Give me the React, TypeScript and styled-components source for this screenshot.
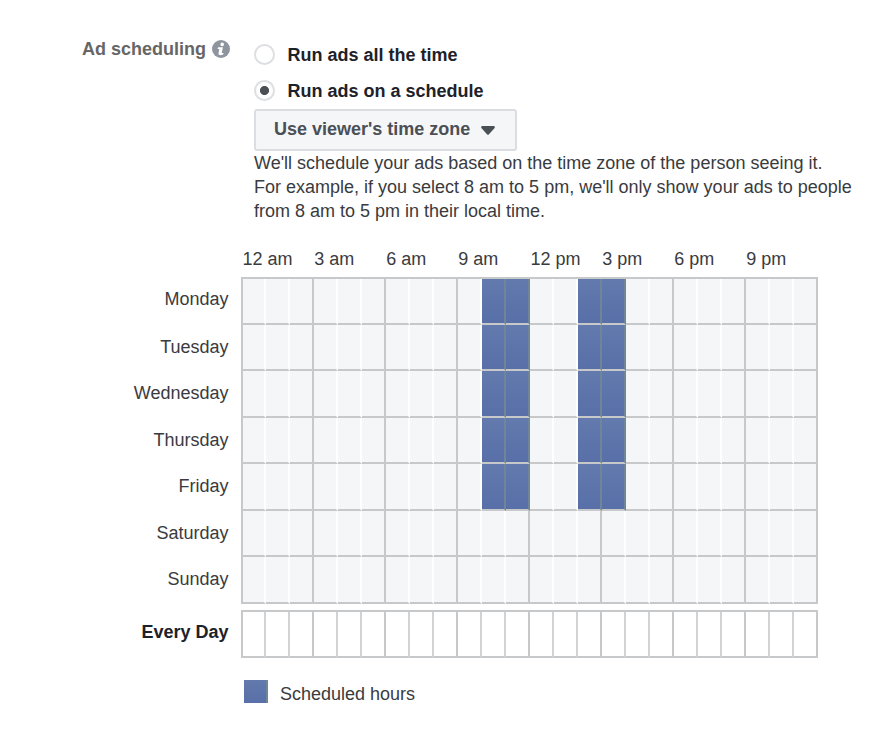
import React from "react";
import styled, { createGlobalStyle } from "styled-components";

const GlobalStyle = createGlobalStyle`
  *, *::before, *::after { box-sizing: border-box; }
  body {
    margin: 0;
    background: #fff;
    color: #3a3b3e;
    font: 18px/24px "Liberation Sans", Arial, sans-serif;
  }
`;

const BLUE = "linear-gradient(#627aad, #586fa8)";
const LINE = "#c6c8ca";

const Page = styled.main`
  width: 876px;
  height: 744px;
  padding-top: 37px;
  overflow: hidden;
  white-space: nowrap;
`;

const Settings = styled.section`
  display: grid;
  grid-template-columns: 148px 1fr;
  column-gap: 24px;
  padding-left: 82px;
`;

const Heading = styled.h2`
  display: flex;
  align-items: center;
  justify-content: space-between;
  height: 24px;
  margin: 0;
  font-size: 18px;
  font-weight: 700;
  color: #666;
`;

const Options = styled.div`
  display: flex;
  flex-direction: column;
  align-items: flex-start;
`;

const Option = styled.label`
  display: flex;
  align-items: center;
  gap: 12.5px;
  height: 36px;
  font-weight: 700;
  color: #1d2129;
`;

const Radio = styled.span<{ $checked?: boolean }>`
  width: 21px;
  height: 21px;
  margin-bottom: 1px;
  border: 2px solid #dddfe2;
  border-radius: 50%;
  background: ${(p) =>
    p.$checked ? "radial-gradient(circle, #4b4f56 4.1px, #fff 5px)" : "#fff"};
`;

const Select = styled.button`
  display: flex;
  align-items: center;
  gap: 11px;
  width: 263px;
  height: 42px;
  padding: 0 0 2px 18px;
  border: 2px solid #dadde1;
  border-radius: 3px;
  background: #f5f6f7;
  color: #4b4f56;
  font: inherit;
  font-weight: 700;
`;

const Caret = styled.svg`
  margin-top: 3px;
`;

const Help = styled.p`
  margin: 0;
`;

const Schedule = styled.section`
  display: grid;
  grid-template-columns: 228.5px 577px;
  column-gap: 12.5px;
  margin-top: 24px;
`;

const Hours = styled.div`
  grid-column: 2;
  display: grid;
  grid-template-columns: repeat(8, 72px);
  height: 30px;
  padding-left: 1px;
`;

const Hour = styled.span<{ $wide?: boolean }>`
  padding-left: ${(p) => (p.$wide ? 0.5 : 0.3)}px;
`;

const Days = styled.div`
  display: grid;
  grid-template-rows: 46px 46px 47px 46px 47px 46px 47px;
  text-align: right;
  padding-top: 2px;
`;

const Day = styled.span<{ $first?: boolean }>`
  padding-top: ${(p) => (p.$first ? 8 : 10)}px;
`;

const EveryDayLabel = styled.div`
  margin-top: 6px;
  padding-top: 10px;
  font-weight: 700;
  text-align: right;
  color: #1d2129;
`;

const Grid = styled.div<{ $single?: boolean }>`
  display: grid;
  grid-template-columns: 23px repeat(23, 24px);
  grid-template-rows: ${(p) =>
    p.$single ? "46px" : "46px 46px 47px 46px 47px 46px 47px"};
  margin-top: ${(p) => (p.$single ? 6 : 0)}px;
  border-top: 2px solid ${LINE};
  border-left: 2px solid ${LINE};
`;

const Cell = styled.div<{ $on?: boolean; $major: boolean; $plain?: boolean }>`
  border-bottom: 2px solid ${LINE};
  border-right: 2px solid
    ${(p) => (p.$on ? "#6f8598" : p.$major ? LINE : p.$plain ? "#d2d3d4" : "#fff")};
  background: ${(p) => (p.$on ? BLUE : p.$plain ? "#fff" : "#f5f6f8")};
  background-clip: padding-box;
`;

const Legend = styled.div`
  display: flex;
  gap: 12px;
  margin: 22px 0 0 244px;
`;

const Swatch = styled.span`
  width: 24px;
  height: 23px;
  background: ${BLUE};
  border-right: 2px solid #6f8598;
`;

const LegendText = styled.span`
  padding-top: 2px;
`;

const hours = ["12 am", "3 am", "6 am", "9 am", "12 pm", "3 pm", "6 pm", "9 pm"];
const days = ["Monday", "Tuesday", "Wednesday", "Thursday", "Friday", "Saturday", "Sunday"];
const scheduled = [10, 11, 14, 15];
const columns = Array.from({ length: 24 }, (_, i) => i);

function InfoIcon() {
  return (
    <svg width="18" height="18" viewBox="0 0 18 18" aria-hidden="true">
      <circle cx="9" cy="9" r="9" fill="#8f959f" />
      <circle cx="10.2" cy="4.4" r="1.8" fill="#fff" />
      <path d="M6 7.2h4.9L9.7 13h1.9l-.5 1.5c-2.8 1.3-5 .6-4.6-1.6L7.4 9H5.6Z" fill="#fff" />
    </svg>
  );
}

export default function App() {
  return (
    <Page>
      <GlobalStyle />
      <Settings>
        <Heading>
          Ad scheduling
          <InfoIcon />
        </Heading>
        <Options>
          <Option>
            <Radio />
            Run ads all the time
          </Option>
          <Option>
            <Radio $checked />
            Run ads on a schedule
          </Option>
          <Select>
            Use viewer's time zone
            <Caret width="14" height="9" viewBox="0 0 14 9">
              <path d="M1.2 0h11.6q1.8.7.6 2.2L8 8.3q-1 1-2 0L.6 2.2Q-.6.7 1.2 0Z" fill="#4b4f56" />
            </Caret>
          </Select>
          <Help>
            We'll schedule your ads based on the time zone of the person seeing it.
            <br />
            For example, if you select 8 am to 5 pm, we'll only show your ads to people
            <br />
            from 8 am to 5 pm in their local time.
          </Help>
        </Options>
      </Settings>
      <Schedule>
        <Hours>
          {hours.map((h) => (
            <Hour key={h} $wide={h.startsWith("12")}>{h}</Hour>
          ))}
        </Hours>
        <Days>
          {days.map((d, i) => (
            <Day key={d} $first={i === 0}>{d}</Day>
          ))}
        </Days>
        <Grid>
          {days.map((d, row) =>
            columns.map((c) => (
              <Cell
                key={d + c}
                $on={row < 5 && scheduled.includes(c)}
                $major={c % 3 === 2}
              />
            )),
          )}
        </Grid>
        <EveryDayLabel>Every Day</EveryDayLabel>
        <Grid $single>
          {columns.map((c) => (
            <Cell key={c} $major={c % 3 === 2} $plain />
          ))}
        </Grid>
      </Schedule>
      <Legend>
        <Swatch />
        <LegendText>Scheduled hours</LegendText>
      </Legend>
    </Page>
  );
}
